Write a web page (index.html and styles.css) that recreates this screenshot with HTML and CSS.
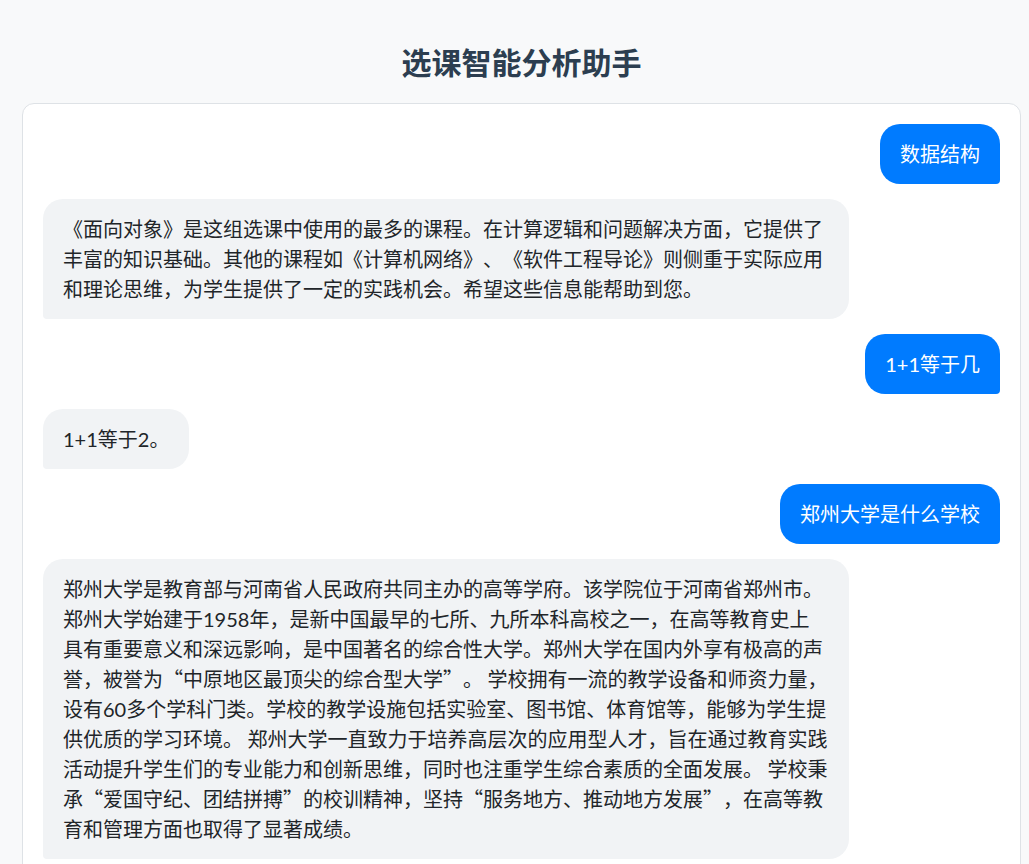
FILE: index.html
```html
<!DOCTYPE html>
<html lang="zh-CN">
<head>
<meta charset="utf-8">
<title>选课智能分析助手</title>
<link rel="stylesheet" href="styles.css">
</head>
<body>
<div class="page">
  <h1 class="title">选课智能分析助手</h1>
  <div class="chat">
    <div class="msg user">数据结构</div>
    <div class="msg bot">《面向对象》是这组选课中使用的最多的课程。在计算逻辑和问题解决方面，它提供了丰富的知识基础。其他的课程如《计算机网络》、《软件工程导论》则侧重于实际应用和理论思维，为学生提供了一定的实践机会。希望这些信息能帮助到您。</div>
    <div class="msg user"><span class="num">1+1</span>等于几</div>
    <div class="msg bot"><span class="num">1+1</span>等于<span class="num">2</span>。</div>
    <div class="msg user">郑州大学是什么学校</div>
    <div class="msg bot">郑州大学是教育部与河南省人民政府共同主办的高等学府。该学院位于河南省郑州市。郑州大学始建于<span class="num">1958</span>年，是新中国最早的七所、九所本科高校之一，在高等教育史上具有重要意义和深远影响，是中国著名的综合性大学。郑州大学在国内外享有极高的声誉，被誉为“中原地区最顶尖的综合型大学”。 学校拥有一流的教学设备和师资力量，设有<span class="num">60</span>多个学科门类。学校的教学设施包括实验室、图书馆、体育馆等，能够为学生提供优质的学习环境。 郑州大学一直致力于培养高层次的应用型人才，旨在通过教育实践活动提升学生们的专业能力和创新思维，同时也注重学生综合素质的全面发展。 学校秉承“爱国守纪、团结拼搏”的校训精神，坚持“服务地方、推动地方发展”，在高等教育和管理方面也取得了显著成绩。</div>
  </div>
</div>
</body>
</html>
```
FILE: styles.css
```css
html, body {
  margin: 0;
  padding: 0;
  background: #f8f9fa;
  font-family: "Noto Sans CJK SC", "Noto Sans", sans-serif;
  color: #212529;
}

.page {
  width: 999px;
  margin-left: 22px;
  padding-top: 40px;
}

.title {
  margin: 0 0 21px;
  text-align: center;
  font-size: 30px;
  line-height: 42px;
  font-weight: 700;
  color: #2c3e50;
}

.chat {
  background: #ffffff;
  border: 1px solid #dee2e6;
  border-radius: 12px;
  padding: 20px;
  display: flex;
  flex-direction: column;
  gap: 15px;
  min-height: 800px;
}

.msg {
  max-width: 80%;
  padding: 15px 20px;
  font-size: 20px;
  line-height: 30px;
  border-radius: 20px;
  word-break: break-all;
  text-spacing-trim: space-all;
  font-feature-settings: "palt" 0, "halt" 0;
}

.num {
  font-family: "Lato", "Open Sans", sans-serif;
}

.user {
  align-self: flex-end;
  background: #007bff;
  color: #ffffff;
  border-bottom-right-radius: 4px;
}

.bot {
  align-self: flex-start;
  background: #f1f3f5;
  color: #212529;
  border-bottom-left-radius: 4px;
}
```
